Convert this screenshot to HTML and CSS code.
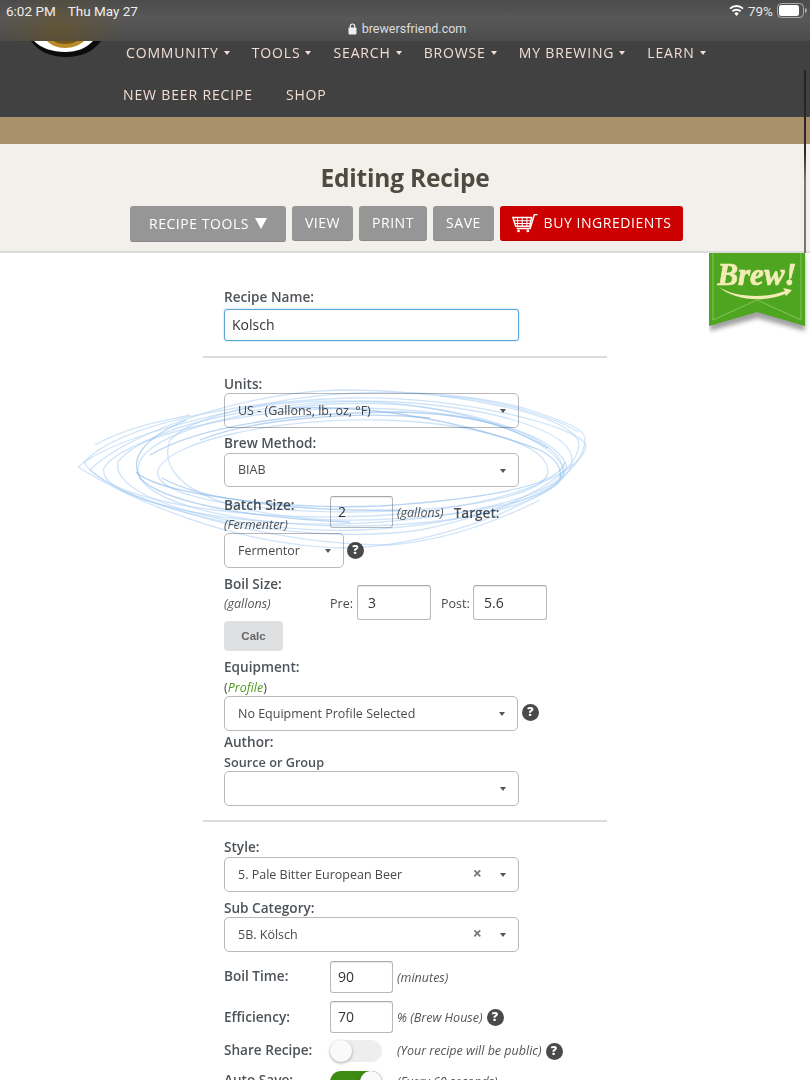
FILE: index.html
```html
<!DOCTYPE html>
<html lang="en">
<head>
<meta charset="utf-8">
<title>Editing Recipe</title>
<link rel="stylesheet" href="styles.css">
</head>
<body>
<div class="screen">
  <header class="top">
    <div class="statusbar">
      <div class="status-row">
        <div class="status-left"><span>6:02 PM</span><span>Thu May 27</span></div>
        <div class="status-right">
          <svg class="wifi" width="15" height="11" viewBox="0 0 15 11"><path d="M7.500 11 5.300 8.400a3.200 3.200 0 0 1 4.400 0Z" fill="#fff"/><path d="M3.400 6.300a6 6 0 0 1 8.200 0M1 3.600a9.600 9.600 0 0 1 13 0" fill="none" stroke="#fff" stroke-width="1.900"/></svg>
          <span>79%</span>
          <svg width="31" height="15" viewBox="0 0 31 15"><rect x=".5" y=".5" width="26" height="14" rx="4" fill="none" stroke="#aaa"/><rect x="2" y="2" width="20" height="11" rx="2.500" fill="#fff"/><path d="M28 5v5c1.200-.4 2-1.400 2-2.500s-.8-2.100-2-2.500Z" fill="#aaa"/></svg>
        </div>
      </div>
      <div class="url">
        <svg width="9" height="12" viewBox="0 0 9 12"><rect x=".5" y="4.500" width="8" height="7" rx="1" fill="#eee"/><path d="M2.300 5V3.200a2.200 2.200 0 0 1 4.400 0V5" fill="none" stroke="#eee" stroke-width="1.200"/></svg>
        <span>brewersfriend.com</span>
      </div>
    </div>
    <svg class="logo" width="72" height="17" viewBox="0 0 72 17">
      <path d="M1 0c8 11 20 16 35 16S63 11 71 0Z" fill="#0b0b0b"/>
      <path d="M4 0c7 7 18 11 31 11S56 7 63 0Z" fill="#fff"/>
      <path d="M17 0c4 4 10 7 18 7S50 4 54 0Z" fill="#b98a2a"/>
      <path d="M24 0c2 2 6 3 11 3S44 2 47 0Z" fill="#7a5618"/>
    </svg>
    <nav class="nav">
      <ul class="nav-row nav-row-main">
        <li class="drop">COMMUNITY</li>
        <li class="drop">TOOLS</li>
        <li class="drop">SEARCH</li>
        <li class="drop">BROWSE</li>
        <li class="drop">MY BREWING</li>
        <li class="drop">LEARN</li>
      </ul>
      <ul class="nav-row nav-row-sub">
        <li>NEW BEER RECIPE</li>
        <li>SHOP</li>
      </ul>
    </nav>
    <div class="band"></div>
  </header>

  <section class="title-bar">
    <h1>Editing Recipe</h1>
    <div class="actions">
      <a class="btn btn-tools">RECIPE TOOLS <span class="tri"></span></a>
      <a class="btn btn-view">VIEW</a>
      <a class="btn btn-print">PRINT</a>
      <a class="btn btn-save">SAVE</a>
      <a class="btn btn-buy">
        <svg width="27" height="20" viewBox="0 0 29 21" fill="none" stroke="#fff">
          <path d="M1 4.500h20l-2 9.500H4Z" stroke-width="1.600"/>
          <path d="M6 5v9M11 5v9M16 5v9M2 8h18M3 11h17" stroke-width="1.100"/>
          <path d="M5 16.300h14.500L24 1.500h3.500" stroke-width="1.600"/>
          <circle cx="7" cy="19" r="1.500" fill="#fff" stroke="none"/><circle cx="17" cy="19" r="1.500" fill="#fff" stroke="none"/>
        </svg>
        BUY INGREDIENTS
      </a>
    </div>
  </section>

  <svg class="ribbon" width="100" height="84" viewBox="0 0 100 84">
    <defs><filter id="rs" x="-10%" y="-10%" width="120%" height="130%"><feGaussianBlur stdDeviation="2"/></filter></defs>
    <path d="M1 0H96V75L48.500 62 1 75Z" transform="translate(0 3)" fill="#333" opacity=".45" filter="url(#rs)"/>
    <path d="M0 0H96V73L48 59 0 73Z" fill="#4ea51f"/>
    <path d="M4 0V67L48 47 92 67V0" fill="none" stroke="#86c45a" stroke-width="1"/>
    <text class="ribbon-text" x="48" y="32" text-anchor="middle">Brew!</text>
    <path d="M10 34C25 44 55 46 76 38L74 35 83 37 77 43 76 41C55 50 24 47 10 34Z" fill="#f3ecb6"/>
  </svg>

  <main class="form">
    <div class="f-name">
      <label class="lbl">Recipe Name:</label>
      <div class="input input-focus">Kolsch</div>
    </div>
    <hr class="rule rule-1">

    <label class="lbl lbl-units">Units:</label>
    <div class="select">US - (Gallons, lb, oz, °F)<i class="caret"></i></div>
    <label class="lbl lbl-method">Brew Method:</label>
    <div class="select">BIAB<i class="caret"></i></div>

    <div class="batch">
      <div class="side">
        <label class="lbl">Batch Size:</label>
        <em class="note">(Fermenter)</em>
      </div>
      <div class="input num">2</div>
      <em class="note unit">(gallons)</em>
      <label class="lbl target">Target:</label>
    </div>
    <div class="with-help">
      <div class="select select-short">Fermentor<i class="caret"></i></div>
      <span class="help">?</span>
    </div>

    <div class="boil">
      <div class="side">
        <label class="lbl">Boil Size:</label>
        <em class="note">(gallons)</em>
      </div>
      <span class="plain">Pre:</span>
      <div class="input wide">3</div>
      <span class="plain post">Post:</span>
      <div class="input wide">5.6</div>
    </div>
    <button class="calc" type="button">Calc</button>

    <label class="lbl lbl-equip">Equipment:</label>
    <div class="profile">(<em>Profile</em>)</div>
    <div class="with-help with-help-equip">
      <div class="select select-equip">No Equipment Profile Selected<i class="caret"></i></div>
      <span class="help">?</span>
    </div>
    <label class="lbl lbl-author">Author:</label>
    <div class="source">Source or Group</div>
    <div class="select select-empty"><i class="caret"></i></div>
    <hr class="rule rule-2">

    <label class="lbl lbl-style">Style:</label>
    <div class="select">5. Pale Bitter European Beer<b class="clear">×</b><i class="caret"></i></div>
    <label class="lbl lbl-sub">Sub Category:</label>
    <div class="select">5B. Kölsch<b class="clear">×</b><i class="caret"></i></div>

    <div class="row row-time">
      <label class="lbl">Boil Time:</label>
      <div class="input num">90</div>
      <em class="note unit">(minutes)</em>
    </div>
    <div class="row row-eff">
      <label class="lbl">Efficiency:</label>
      <div class="input num">70</div>
      <em class="note unit">% (Brew House)</em>
      <span class="help help-inline">?</span>
    </div>
    <div class="row row-share">
      <label class="lbl">Share Recipe:</label>
      <span class="toggle"><i class="knob"></i></span>
      <em class="note unit unit-share">(Your recipe will be public)</em>
      <span class="help help-inline">?</span>
    </div>
    <div class="row row-auto">
      <label class="lbl">Auto Save:</label>
      <span class="toggle toggle-on"><i class="knob"></i></span>
      <em class="note unit unit-share">(Every 60 seconds)</em>
    </div>
  </main>

  <svg class="scribble" width="530" height="180" viewBox="70 378 530 180" fill="none" stroke="#a9cdf4" stroke-width="1.300" stroke-opacity=".55">
    <path d="M78 467C110 440 190 420 260 405 360 384 470 392 530 410 560 420 584 428 585 438 586 456 570 472 550 488 500 520 420 545 350 548 240 548 130 500 78 467Z"/>
    <path d="M90 470C130 430 250 392 340 390 440 390 560 410 578 440 586 470 520 510 420 530 320 545 150 520 90 470Z"/>
    <path d="M118 462C150 420 300 396 400 402 490 408 575 430 572 462 570 490 480 525 360 530 240 534 110 500 118 462Z"/>
    <path d="M138 468C140 430 280 398 390 404 480 410 566 440 563 472 560 500 470 526 350 526 250 526 136 505 138 468Z"/>
    <path d="M170 440C210 400 350 392 440 410 510 424 564 450 564 474 560 498 470 518 360 520 260 522 150 495 170 440Z"/>
    <path d="M158 470C170 440 280 418 380 420 460 422 545 440 548 470 550 495 460 512 350 512 260 512 150 498 158 470Z"/>
    <path d="M104 468C120 440 230 410 350 408 450 408 550 428 566 464 570 492 470 520 340 524 220 526 96 498 104 468Z"/>
    <path d="M84 462C120 425 230 402 350 398 460 396 575 425 586 445 585 470 520 500 420 512 300 526 110 510 84 462Z"/>
    <path d="M136 472C160 495 290 510 380 506 470 500 560 488 565 462" stroke="#7fb2ea"/>
    <path d="M186 420C140 440 130 460 140 478 160 500 240 518 350 522" stroke="#7fb2ea"/>
    <path d="M290 408C380 404 470 424 540 450 555 458 562 468 560 478" stroke="#7fb2ea"/>
    <path d="M150 455C200 425 300 412 400 412 470 414 510 425 548 448" stroke="#7fb2ea"/>
    <path d="M120 490C200 520 290 545 390 545 450 540 500 520 540 500"/>
    <path d="M95 445C130 425 170 420 190 415M440 396C500 398 560 420 578 432"/>
    <path d="M162 478C200 500 300 512 400 510" stroke="#7fb2ea"/>
    <path d="M200 440C250 420 350 410 430 418" stroke="#7fb2ea"/>
  </svg>
  <div class="scrollbar"></div>
</div>
</body>
</html>
```
FILE: styles.css
```css
* { box-sizing: border-box; }
html, body { margin: 0; padding: 0; height: 1080px; overflow: hidden; background: #fff; }
body { font-family: "Open Sans", "Noto Sans", sans-serif; color: #4a4a4a; }
.screen { position: relative; width: 810px; height: 1080px; overflow: hidden; }

/* top */
.top { position: relative; }
.statusbar { position: relative; z-index: 2; height: 41px; background: radial-gradient(ellipse 65px 40px at 60px 30px, rgba(110,85,30,.55), rgba(110,85,30,0)), linear-gradient(#4b4b4b, #585858 45%, #4b4b4b); color: #eee; font-family: Roboto, sans-serif; padding: 3px 2px 0 6px; }
.status-row { display: flex; justify-content: space-between; align-items: center; height: 15px; font-size: 13.500px; }
.status-left { display: flex; gap: 12px; }
.status-right { display: flex; align-items: center; gap: 4px; color: #e8e8e8; font-size: 13.500px; }
.url { display: flex; justify-content: center; align-items: center; gap: 5px; margin-top: 3px; height: 15px; font-size: 12.500px; color: #ddd; }
.logo { position: absolute; left: 30px; top: 41px; z-index: 1; }
.nav { height: 76px; background: #414141; color: #f2ded4; font-size: 14px; letter-spacing: .85px; }
.nav-row { list-style: none; margin: 0; display: flex; }
.nav-row-main { padding: 0 0 0 126px; gap: 22px; height: 23px; align-items: center; }
.nav-row-sub { padding: 0 0 0 123px; gap: 33px; margin-top: 19px; height: 23px; align-items: center; }
.drop { display: flex; align-items: center; gap: 5px; white-space: nowrap; }
.drop::after { content: ""; border: 3.500px solid transparent; border-top: 4px solid #f2ded4; border-bottom: 0; }
.band { height: 27px; background: #a8906a; }

/* title */
.title-bar { height: 109px; background: #f3f0eb; border-bottom: 2px solid #dcdcdc; padding-top: 16px; }
.title-bar h1 { margin: 0; height: 35px; line-height: 35px; text-align: center; font-size: 24.500px; font-weight: 700; color: #4f4a3f; letter-spacing: -.2px; }
.actions { display: flex; gap: 6px; margin: 11px 0 0 130px; align-items: flex-start; }
.btn { display: flex; align-items: center; justify-content: center; height: 35px; padding-bottom: 1px; border-radius: 3px; background: #969696; border-bottom: 1px solid #888; color: #fff; font-size: 14px; letter-spacing: .55px; }
.btn-tools { width: 156px; height: 36px; gap: 6px; }
.tri { display: inline-block; border: 6px solid transparent; border-top: 11px solid #fff; border-bottom: 0; margin-bottom: -1px; }
.btn-view { width: 61px; }
.btn-print { width: 68px; }
.btn-save { width: 61px; }
.btn-buy { width: 183px; background: #cc0000; border-bottom-color: #b50000; gap: 5px; }

/* ribbon */
.ribbon { position: absolute; left: 709px; top: 253px; }
.ribbon-text { font-family: "Liberation Serif", serif; font-style: italic; font-weight: 700; font-size: 31px; fill: #f3ecb6; stroke: #f3ecb6; stroke-width: .7px; }

/* form */
.form { padding: 0 0 0 224px; font-size: 13px; }
.f-name { padding-top: 35px; }
.lbl { display: block; font-size: 13.600px; font-weight: 600; line-height: 18px; height: 18px; color: #4d5358; white-space: nowrap; }
.input { display: flex; align-items: center; height: 35px; padding: 0 0 1px 7px; background: #fff; border: 1px solid #b8b8b8; border-top-color: #a8a8a8; border-radius: 3px; font-size: 14px; color: #333; box-shadow: inset 0 1px 1px rgba(0,0,0,.08); }
.input-focus { width: 295px; height: 32px; margin-top: 3px; border-color: #5ca5d8; box-shadow: 0 0 2px rgba(92,165,216,.6); }
.rule { position: absolute; left: 203px; width: 404px; height: 2px; margin: 0; border: 0; background: #dcdcdc; }
.rule-1 { top: 356px; }
.rule-2 { top: 820px; }
.select { position: relative; display: flex; align-items: center; width: 295px; height: 35px; padding: 0 0 1px 13px; border: 1px solid #b8b8b8; border-radius: 5px; font-size: 12.500px; color: #4a4a4a; background: #fff; }
.caret { position: absolute; right: 12px; top: 15px; border: 3.500px solid transparent; border-top: 4px solid #555; border-bottom: 0; }
.clear { position: absolute; right: 36px; top: 4px; font-size: 16px; font-weight: 700; color: #777; }
.lbl-units { margin-top: 34px; }
.lbl-units + .select { margin-top: 0; }
.lbl-method { margin-top: 6px; }
.lbl-method + .select { margin-top: 1px; height: 34px; }
.batch { display: flex; height: 46px; align-items: flex-start; margin-top: 9px; }
.side { width: 106px; flex: none; }
.side .lbl { margin-bottom: 2px; }
.note { display: block; font-size: 12.500px; line-height: 17px; color: #555; white-space: nowrap; }
.num { width: 63px; height: 32px; flex: none; }
.unit { margin: 8px 0 0 4px; }
.target { margin: 8px 0 0 10px; }
.with-help { display: flex; align-items: center; gap: 3px; }
.batch + .with-help { margin-top: -9px; }
.select-short { width: 120px; }
.help { display: inline-flex; align-items: center; justify-content: center; width: 17px; height: 17px; border-radius: 50%; background: #4a4a4a; color: #fff; font-size: 12.500px; font-weight: 800; line-height: 1; flex: none; }
.boil { display: flex; align-items: flex-start; height: 46px; margin-top: 7px; }
.plain { margin-top: 20px; font-size: 12.500px; width: 27px; flex: none; }
.wide { width: 74px; height: 35px; padding-left: 10px; margin-top: 10px; }
.post { width: 32px; margin-left: 10px; }
.calc { display: block; width: 59px; height: 30px; margin-top: 0; padding: 0; border: 0; border-radius: 4px; background: #dfe0e2; color: #666; font-family: "Liberation Sans", sans-serif; font-size: 11.500px; font-weight: 700; }
.lbl-equip { margin-top: 7px; }
.profile { font-size: 12.500px; line-height: 19px; height: 19px; margin-top: 2px; color: #4a4a4a; }
.profile em { color: #4b9a1d; }
.with-help-equip { margin-top: -1px; gap: 4px; }
.with-help-equip .help { margin-top: -3px; }
.select-equip { width: 294px; height: 35px; }
.lbl-author { margin-top: 2px; }
.source { font-size: 12.700px; font-weight: 600; line-height: 17px; height: 17px; margin-top: 3px; color: #4d5358; }
.select-empty { margin-top: 0; height: 35px; }
.lbl-style { margin-top: 32px; }
.lbl-style + .select { margin-top: 1px; }
.lbl-sub { margin-top: 7px; }
.lbl-sub + .select { margin-top: 0; }
.row { display: flex; align-items: flex-start; }
.row .lbl { width: 106px; flex: none; }
.row-time { margin-top: 9px; height: 40px; }
.row-time .lbl { margin-top: 6px; }
.row-eff { height: 39px; }
.row-eff .lbl { margin-top: 7px; }
.row-share { height: 31px; }
.row-share .lbl { margin-top: 1px; }
.help-inline { margin: 8px 0 0 4px; }
.toggle { position: relative; display: block; width: 52px; height: 22px; border-radius: 11px; background: #eeeeee; flex: none; }
.knob { position: absolute; left: 0; top: 0; width: 22px; height: 22px; border-radius: 50%; background: #fafafa; box-shadow: 0 1px 3px rgba(0,0,0,.35); }
.toggle-on { background: #3c8c14; }
.toggle-on .knob { left: 30px; }
.unit-share { margin: 2px 0 0 15px; }
.row-share .help-inline { margin-top: 3px; }

/* overlays */
.scribble { position: absolute; left: 70px; top: 378px; mix-blend-mode: multiply; }
.scrollbar { position: absolute; left: 804px; top: 70px; width: 2px; height: 183px; background: linear-gradient(#222 0, #2a2a2a 45%, #777 60%, #777 100%); }
```
